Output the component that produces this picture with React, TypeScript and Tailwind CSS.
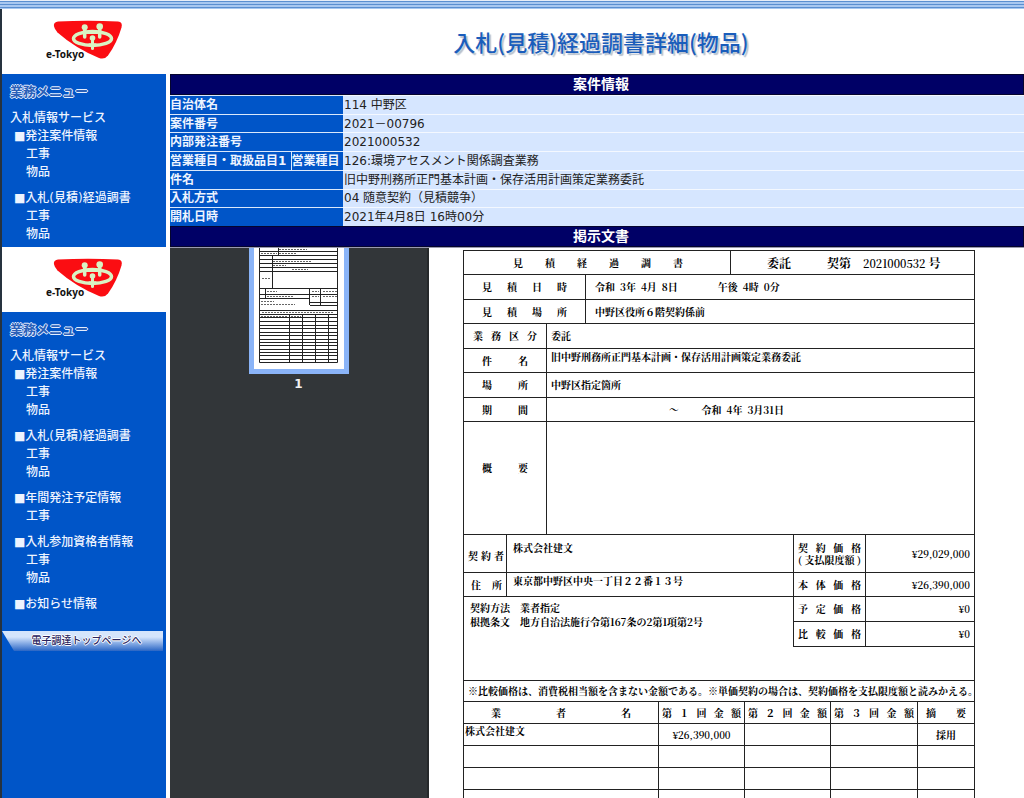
import { clsx } from "clsx";

// ─── Data ─────────────────────────────────────────────────────────────────────

type MenuGroup = { title: string; items: string[] };

const BASE_MENU: MenuGroup[] = [
  { title: "発注案件情報", items: ["工事", "物品"] },
  { title: "入札(見積)経過調書", items: ["工事", "物品"] },
];

const FULL_MENU: MenuGroup[] = [
  ...BASE_MENU,
  { title: "年間発注予定情報", items: ["工事"] },
  { title: "入札参加資格者情報", items: ["工事", "物品"] },
  { title: "お知らせ情報", items: [] },
];

const CASE_ROWS = [
  { label: "自治体名", value: "114 中野区" },
  { label: "案件番号", value: "2021－00796" },
  { label: "内部発注番号", value: "2021000532" },
  { label: "営業種目・取扱品目1", sub: "営業種目", value: "126:環境アセスメント関係調査業務" },
  { label: "件名", value: "旧中野刑務所正門基本計画・保存活用計画策定業務委託" },
  { label: "入札方式", value: "04 随意契約（見積競争）" },
  { label: "開札日時", value: "2021年4月8日 16時00分" },
];

const EMPTY_BIDS = [1, 2, 3];

// ─── Shared class names ───────────────────────────────────────────────────────

const UI_FONT = "font-['DejaVu_Sans','Noto_Sans_CJK_JP',sans-serif]";
const DOC_FONT = "font-['Noto_Serif_CJK_JP','Liberation_Serif','Noto_Sans_CJK_JP',serif]";
const RULED = "border-r border-b border-[#222]";
const CELL = "border-r border-b border-[#222] p-0 font-bold";
const SPREAD = "[text-align-last:justify]";

// ─── Sidebar ──────────────────────────────────────────────────────────────────

function Logo() {
  return (
    <svg viewBox="0 0 84 44" className="h-[44px] w-[84px]" role="img" aria-label="e-Tokyo">
      <path
        d="M14 4.500Q44 3 74 4.500Q79 5 77.500 10.500Q73 26 64 38.500Q60.500 43 55 41Q31 31 13.500 15.500Q6 6 14 4.500Z"
        fill="#fb0d12"
      />
      <ellipse cx="48.500" cy="21.500" rx="19" ry="7" fill="none" stroke="#d9f3c4" strokeWidth="3.500" />
      <g fill="none" stroke="#d9f3c4" strokeLinecap="round">
        <path d="M40.700 11V20M55.700 10V20" strokeWidth="3.500" />
        <path d="M41 15.700H56" strokeWidth="2.500" />
        <path d="M48.500 22V31.500" strokeWidth="3" />
        <path d="M45.500 27.500H51.500" strokeWidth="2.500" />
      </g>
      <g fill="#d9f3c4">
        <circle cx="40.700" cy="10.300" r="3" />
        <circle cx="55.700" cy="9.500" r="3.300" />
        <circle cx="48.500" cy="21" r="2.800" />
      </g>
      <text x="2" y="41" fontSize="10" fontWeight="700" fontFamily="'Noto Sans', sans-serif" fill="#111">
        e-Tokyo
      </text>
    </svg>
  );
}

function Menu({ groups }: { groups: MenuGroup[] }) {
  return (
    <nav className="px-2 pt-[9px] text-xs leading-[18px] text-[#eef4ff]">
      <h2 className="mb-2 text-[13px] font-bold text-[#2b61b8] [text-shadow:1px_0_#e3edff,-1px_0_#e3edff,0_1px_#e3edff,0_-1px_#e3edff]">
        業務メニュー
      </h2>
      <p className="font-medium">入札情報サービス</p>
      <ul className="space-y-2 pl-1">
        {groups.map((group) => (
          <li key={group.title}>
            <a href="#" className="block font-medium whitespace-nowrap">
              ■{group.title}
            </a>
            {group.items.map((item) => (
              <a key={item} href="#" className="block pl-3 font-medium">
                {item}
              </a>
            ))}
          </li>
        ))}
      </ul>
    </nav>
  );
}

function TopPageLink() {
  return (
    <a
      href="#"
      className="mt-[18px] mr-[3px] block bg-linear-to-b from-[#d5e5fc] from-30% to-[#2a66c4] pl-2 text-center text-[10px] leading-5 font-medium text-[#2b2560] [clip-path:polygon(0_0,100%_0,100%_100%,12px_100%)] [text-shadow:1px_0_#fff,-1px_0_#fff,0_1px_#fff,0_-1px_#fff]"
    >
      電子調達トップページへ
    </a>
  );
}

function Sidebar() {
  return (
    <aside className="flex w-[166px] shrink-0 flex-col border-l-2 border-[#26323f] bg-[#0055c8]">
      <div className="h-[65px] bg-white pt-2 pl-[42px]">
        <Logo />
      </div>
      <div className="h-[173px]">
        <Menu groups={BASE_MENU} />
      </div>
      <div className="h-[65px] bg-white pt-2 pl-[42px]">
        <Logo />
      </div>
      <Menu groups={FULL_MENU} />
      <TopPageLink />
    </aside>
  );
}

// ─── Case information ─────────────────────────────────────────────────────────

function Banner({ children }: { children: string }) {
  return (
    <h2 className="border border-[#05052e] bg-[#000066] pl-2 text-center text-sm leading-[19px] font-bold text-white">
      {children}
    </h2>
  );
}

function CaseTable() {
  return (
    <table className="h-[131px] w-full table-fixed border-collapse text-left text-xs leading-4">
      <colgroup>
        <col className="w-[121px]" />
        <col className="w-[52px]" />
        <col />
      </colgroup>
      <tbody>
        {CASE_ROWS.map((row) => (
          <tr key={row.label} className="border-t border-[#dbe8fb]">
            <th
              scope="row"
              colSpan={row.sub ? 1 : 2}
              className="bg-[#0055c8] p-0 font-bold whitespace-nowrap text-[#eef4ff]"
            >
              {row.label}
            </th>
            {row.sub && (
              <th scope="row" className="border-l border-[#dbe8fb] bg-[#0055c8] p-0 font-bold text-[#eef4ff]">
                {row.sub}
              </th>
            )}
            <td className="border-t border-t-[#f4f8ff] bg-[#d6e6ff] p-0 pl-px text-[#222]">{row.value}</td>
          </tr>
        ))}
      </tbody>
    </table>
  );
}

// ─── Document viewer ──────────────────────────────────────────────────────────

function PageThumbnail() {
  return (
    <button type="button" className="flex flex-col items-center text-xs font-bold text-[#f1f1f1]">
      <span className="block border-x-[5px] border-b-[5px] border-[#8ab4f8] bg-white px-[5px] pb-1">
        <svg viewBox="0 0 80 117" className="h-[117px] w-[80px]" aria-hidden="true">
          <g fill="none" stroke="#222" strokeWidth="1">
            <path d="M.5 0V114.500H78.500V0M0 3.500H79M0 7.500H79M0 11.500H79M0 15.500H79M0 19.500H79M0 23.500H79M0 40.500H79M0 46.500H79M0 50.500H50M51 54.500H79M51 57.500H79M0 62.500H79M0 66.500H79" />
            <path d="M19.500 0V7M13.500 7V40M6.500 40V50M50.500 40V57M61.500 40V57M30.500 66V114M43.500 66V114M56.500 66V114M69.500 66V114" />
            <path d="M0 69.500H79M0 73.500H79M0 77.500H79M0 80.500H79M0 84.500H79M0 87.500H79M0 91.500H79M0 94.500H79M0 97.500H79M0 101.500H79M0 104.500H79M0 107.500H79M0 111.500H79" />
          </g>
          <g fill="none" stroke="#666" strokeWidth="1" strokeDasharray="2 1">
            <path d="M20 1.500H48M20 5.500H38M2 5.500H18M14 13.500H52M14 17.500H27M33 21.500H49M3 30.500H11M8 43.500H18M8 48.500H34M2 53.500H15M2 56.500H36M53 43.500H60M53 48.500H60M64 43.500H78M64 48.500H78M3 64.500H74M2 68.500H28M32 68.500H42" />
          </g>
        </svg>
      </span>
      <span className="leading-5">1</span>
    </button>
  );
}

function PriceRow({ label, value, className }: { label: string; value: string; className: string }) {
  return (
    <tr className={className}>
      <th scope="row" className={clsx(CELL, SPREAD, "border-l px-1")}>
        {label}
      </th>
      <td className={clsx(RULED, "pr-1 text-right font-semibold")}>{value}</td>
    </tr>
  );
}

function DocumentPage() {
  return (
    <article
      className={clsx(
        DOC_FONT,
        "mt-0.5 mr-[49px] ml-[34px] border-t border-l border-[#222] text-[10px] leading-3 font-bold text-black"
      )}
    >
      <table className="h-[24px] w-full table-fixed border-separate border-spacing-0">
        <tbody>
          <tr>
            <th className={clsx(CELL, SPREAD, "w-[267px] pr-[47px] pl-[49px]")}>見積経過調書</th>
            <td className={clsx(CELL, "pl-9 text-xs whitespace-pre")}>
              委託{"　　　"}契第{"　"}
              <span className="text-[11px] font-semibold">2021000532</span> 号
            </td>
          </tr>
        </tbody>
      </table>

      <table className="w-full table-fixed border-separate border-spacing-0">
        <tbody>
          <tr className="h-[25px]">
            <th scope="row" className={clsx(CELL, SPREAD, "w-[122px] px-[18px]")}>見積日時</th>
            <td className={clsx(CELL, "pl-[9px] whitespace-pre")}>令和  3年  4月  8日{"　　　　"}午後  4時  0分</td>
          </tr>
          <tr className="h-[24px]">
            <th scope="row" className={clsx(CELL, SPREAD, "px-[18px]")}>見積場所</th>
            <td className={clsx(CELL, "pl-[9px]")}>中野区役所６階契約係前</td>
          </tr>
        </tbody>
      </table>

      <table className="w-full table-fixed border-separate border-spacing-0">
        <tbody>
          <tr className="h-[25px]">
            <th scope="row" className={clsx(CELL, SPREAD, "w-[83px] px-[9px]")}>業務区分</th>
            <td className={clsx(CELL, "pl-1")}>委託</td>
          </tr>
          <tr className="h-[24px]">
            <th scope="row" className={clsx(CELL, SPREAD, "px-[18px]")}>件名</th>
            <td className={clsx(CELL, "pb-2 pl-1")}>旧中野刑務所正門基本計画・保存活用計画策定業務委託</td>
          </tr>
          <tr className="h-[25px]">
            <th scope="row" className={clsx(CELL, SPREAD, "px-[18px]")}>場所</th>
            <td className={clsx(CELL, "pl-1")}>中野区指定箇所</td>
          </tr>
          <tr className="h-[24px]">
            <th scope="row" className={clsx(CELL, SPREAD, "px-[18px]")}>期間</th>
            <td className={clsx(CELL, "pl-[122px] whitespace-pre")}>～{"　　 "}令和  4年  3月31日</td>
          </tr>
          <tr className="h-[113px]">
            <th scope="row" className={clsx(CELL, SPREAD, "px-[18px] pb-5")}>概要</th>
            <td className={CELL} />
          </tr>
        </tbody>
      </table>

      <div className="flex border-b border-[#222]">
        <div className="flex-1">
          <table className="w-full table-fixed border-separate border-spacing-0">
            <tbody>
              <tr className="h-[38px]">
                <th scope="row" className={clsx(RULED, SPREAD, "w-[43px] pt-1 pr-0.5 pl-1")}>
                  契約者
                </th>
                <td className="border-b border-[#222] pb-3 pl-1.5">株式会社建文</td>
              </tr>
              <tr className="h-[24px]">
                <th scope="row" className={clsx(RULED, SPREAD, "pr-1 pl-[7px]")}>
                  住所
                </th>
                <td className="border-b border-[#222] pb-2 pl-1.5">東京都中野区中央一丁目２２番１３号</td>
              </tr>
            </tbody>
          </table>
          <p className="pt-1 pl-1.5 leading-[14px] whitespace-pre">
            契約方法{"　"}業者指定{"\n"}根拠条文{"　"}地方自治法施行令第167条の2第1項第2号
          </p>
        </div>
        <div className="h-[145px] w-[182px] border-r border-[#222]">
          <table className="-mr-px w-[182px] table-fixed border-separate border-spacing-0">
            <tbody>
              <tr className="h-[38px]">
                <th scope="row" className={clsx(CELL, "w-[73px] border-l px-1")}>
                  <span className={clsx(SPREAD, "block")}>契約価格</span>
                  <span className="block whitespace-nowrap">( 支払限度額 )</span>
                </th>
                <td className={clsx(RULED, "pr-1 text-right font-semibold")}>¥29,029,000</td>
              </tr>
              <PriceRow className="h-[24px]" label="本体価格" value="¥26,390,000" />
              <PriceRow className="h-[25px]" label="予定価格" value="¥0" />
              <PriceRow className="h-[25px]" label="比較価格" value="¥0" />
            </tbody>
          </table>
        </div>
      </div>

      <p className="border-r border-b border-[#222] pl-1 leading-5 whitespace-nowrap">
        ※比較価格は、消費税相当額を含まない金額である。※単価契約の場合は、契約価格を支払限度額と読みかえる。
      </p>

      <table className="w-full table-fixed border-separate border-spacing-0">
        <thead>
          <tr className="h-[22px]">
            <th className={clsx(CELL, SPREAD, "px-[27px]")}>業者名</th>
            <th className={clsx(CELL, SPREAD, "w-[86px] px-[3px]")}>第１回金額</th>
            <th className={clsx(CELL, SPREAD, "w-[86px] px-[3px]")}>第２回金額</th>
            <th className={clsx(CELL, SPREAD, "w-[87px] px-[3px]")}>第３回金額</th>
            <th className={clsx(CELL, SPREAD, "w-[57px] px-2")}>摘要</th>
          </tr>
        </thead>
        <tbody>
          <tr className="h-[22px]">
            <td className={clsx(CELL, "pb-2 pl-px")}>株式会社建文</td>
            <td className={clsx(RULED, "p-0 text-center font-semibold")}>¥26,390,000</td>
            <td className={CELL} />
            <td className={CELL} />
            <td className={clsx(CELL, "text-center")}>採用</td>
          </tr>
          {EMPTY_BIDS.map((row) => (
            <tr key={row} className="h-[22px]">
              <td className={CELL} />
              <td className={CELL} />
              <td className={CELL} />
              <td className={CELL} />
              <td className={CELL} />
            </tr>
          ))}
        </tbody>
      </table>
    </article>
  );
}

// ─── App ──────────────────────────────────────────────────────────────────────

export default function App() {
  return (
    <div className={clsx(UI_FONT, "flex h-screen flex-col overflow-hidden bg-white")}>
      <div className="h-[9px] shrink-0 border-t border-[#e8eef8] bg-[repeating-linear-gradient(#5b8fd0_0_1px,#a9c8f0_1px_3px)]" />
      <div className="flex min-h-0 flex-1 gap-1">
        <Sidebar />
        <main className="flex min-w-0 flex-1 flex-col">
          <h1 className="h-[65px] pt-4 pl-2 text-center font-['Noto_Sans_CJK_JP',sans-serif] text-[22px] leading-8 font-medium text-[#1a5dbb] [text-shadow:2px_2px_1px_#b8c2cf]">
            入札(見積)経過調書詳細(物品)
          </h1>
          <Banner>案件情報</Banner>
          <CaseTable />
          <Banner>掲示文書</Banner>
          <div className="flex min-h-0 flex-1 border-t border-[#9a9ab0]">
            <div className="flex w-[259px] shrink-0 items-start justify-center border-r-2 border-[#26292b] bg-[#323639]">
              <PageThumbnail />
            </div>
            <div className="min-w-0 flex-1 overflow-hidden">
              <DocumentPage />
            </div>
          </div>
        </main>
      </div>
    </div>
  );
}
